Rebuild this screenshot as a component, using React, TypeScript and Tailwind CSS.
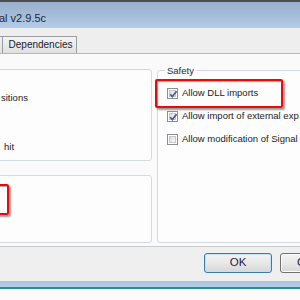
function CheckBox({ checked }: { checked?: boolean }) {
  return (
    <span className="relative w-[11px] h-[11px] shrink-0 border border-[#8e8f8f] bg-white p-[1px] flex">
      <span className="flex-1 border border-[#c4c7cc] bg-gradient-to-br from-[#d9dadc] to-[#fbfbfb]" />
      {checked && (
        <svg className="absolute left-0 top-0" width="11" height="11" viewBox="0 0 11 11">
          <path d="M2.2 5.2 L4.3 7.6 L8.6 2.2" fill="none" stroke="#4a5c92" strokeWidth="1.7" />
        </svg>
      )}
    </span>
  );
}

function Option({ label, checked }: { label: string; checked?: boolean }) {
  return (
    <div className="h-[22px] flex items-center gap-[4px] whitespace-nowrap">
      <CheckBox checked={checked} />
      <span>{label}</span>
    </div>
  );
}

export default function App() {
  return (
    <div className="w-[300px] h-[300px] overflow-hidden flex flex-col bg-white font-['Liberation_Sans',Arial,sans-serif] text-[#1b1b1b]">
      {/* Window frame / title */}
      <div className="h-[2px] bg-[#4e4e4e]" />
      <div className="h-[26px] bg-gradient-to-b from-[#98b0cc] via-[#a4bcd8] to-[#b4cde7] pt-[10px] -ml-[1px] text-[11px] leading-[13px] text-[#1d2838] whitespace-nowrap">
        al v2.9.5c
      </div>

      {/* Tabs */}
      <div className="h-[26px] bg-[#edeeed] pt-[8px] flex items-end border-b border-[#b3b6ba]">
        <div className="w-[3px] h-[17px] border-t border-r border-[#9a9da1] bg-gradient-to-b from-[#f2f2f2] to-[#e1e1e1]" />
        <div className="w-[74px] h-[17px] border-t border-r border-[#9a9da1] bg-gradient-to-b from-[#f4f4f4] to-[#e0e0e0] text-[10px] leading-[15px] text-center pl-[2px] text-[#1b1b2b]">
          Dependencies
        </div>
      </div>

      {/* Tab page */}
      <div className="h-[193px] bg-[#fafafa] flex gap-[5px] text-[9.5px] border-b border-[#c9cbcc]">
        <div className="w-[152px] shrink-0 pt-[15px] flex flex-col gap-[14px]">
          <div className="h-[92px] -ml-[6px] border border-[#d3dbe1] rounded-[3px] bg-[#fdfdfd] pl-[6px] pt-[22px] leading-[12px] whitespace-nowrap">
            <div>sitions</div>
            <div className="mt-[37px] pl-[3px]">hit</div>
          </div>
          <div className="relative h-[68px] -ml-[6px] border border-[#d3dbe1] rounded-[3px] bg-[#fdfdfd]">
            <div className="absolute left-[-16px] top-[8px] w-[30px] h-[31px] border-2 border-[#ea0a0a] rounded-[2px] shadow-[2px_2px_2px_rgba(0,0,0,0.4),inset_1px_1px_1px_rgba(0,0,0,0.35)]" />
          </div>
        </div>

        <div className="relative w-[160px] shrink-0 mt-[16px] h-[173px] border border-[#d3dbe1] rounded-[3px] bg-[#fdfdfd] pl-[9px] pt-[11px]">
          <div className="absolute left-[7px] -top-[6px] px-[2px] bg-[#fbfbfb] leading-[11px] text-[#2a2a2a]">Safety</div>
          <div className="absolute left-[-3px] top-[8px] w-[128px] h-[29px] border-2 border-[#ea0a0a] rounded-[2px] shadow-[2px_2px_2px_rgba(0,0,0,0.4),inset_1px_1px_1px_rgba(0,0,0,0.35)]" />
          <div className="flex flex-col gap-[1px]">
            <Option label="Allow DLL imports" checked />
            <Option label="Allow import of external exp" checked />
            <Option label="Allow modification of Signal" />
          </div>
        </div>
      </div>

      {/* Buttons */}
      <div className="h-[34px] bg-[#eeefee] pl-[204px] pt-[6px] flex gap-[8px]">
        <div className="w-[68px] h-[20px] shrink-0 rounded-[3px] border border-[#3d7bad] bg-gradient-to-b from-[#f3f3f3] via-[#e8e8e8] to-[#d6d6d6] shadow-[inset_0_0_0_1px_#bfe3f5] flex items-center justify-center text-[11.5px] text-[#1e1c4a]">
          OK
        </div>
        <div className="w-[68px] h-[20px] shrink-0 rounded-[3px] border border-[#707070] bg-gradient-to-b from-[#f3f3f3] via-[#e8e8e8] to-[#d6d6d6] shadow-[inset_0_0_0_1px_#fcfcfc] pl-[16px] flex items-center text-[11.5px] text-[#1e1c4a]">
          C
        </div>
      </div>

      {/* Window bottom edge */}
      <div className="h-[6px] bg-gradient-to-b from-[#a9c3df] to-[#b7cfe8]" />
      <div className="h-[2px] bg-[#2a8c99]" />
      <div className="flex-1 bg-[#fbfbfb]" />
    </div>
  );
}
